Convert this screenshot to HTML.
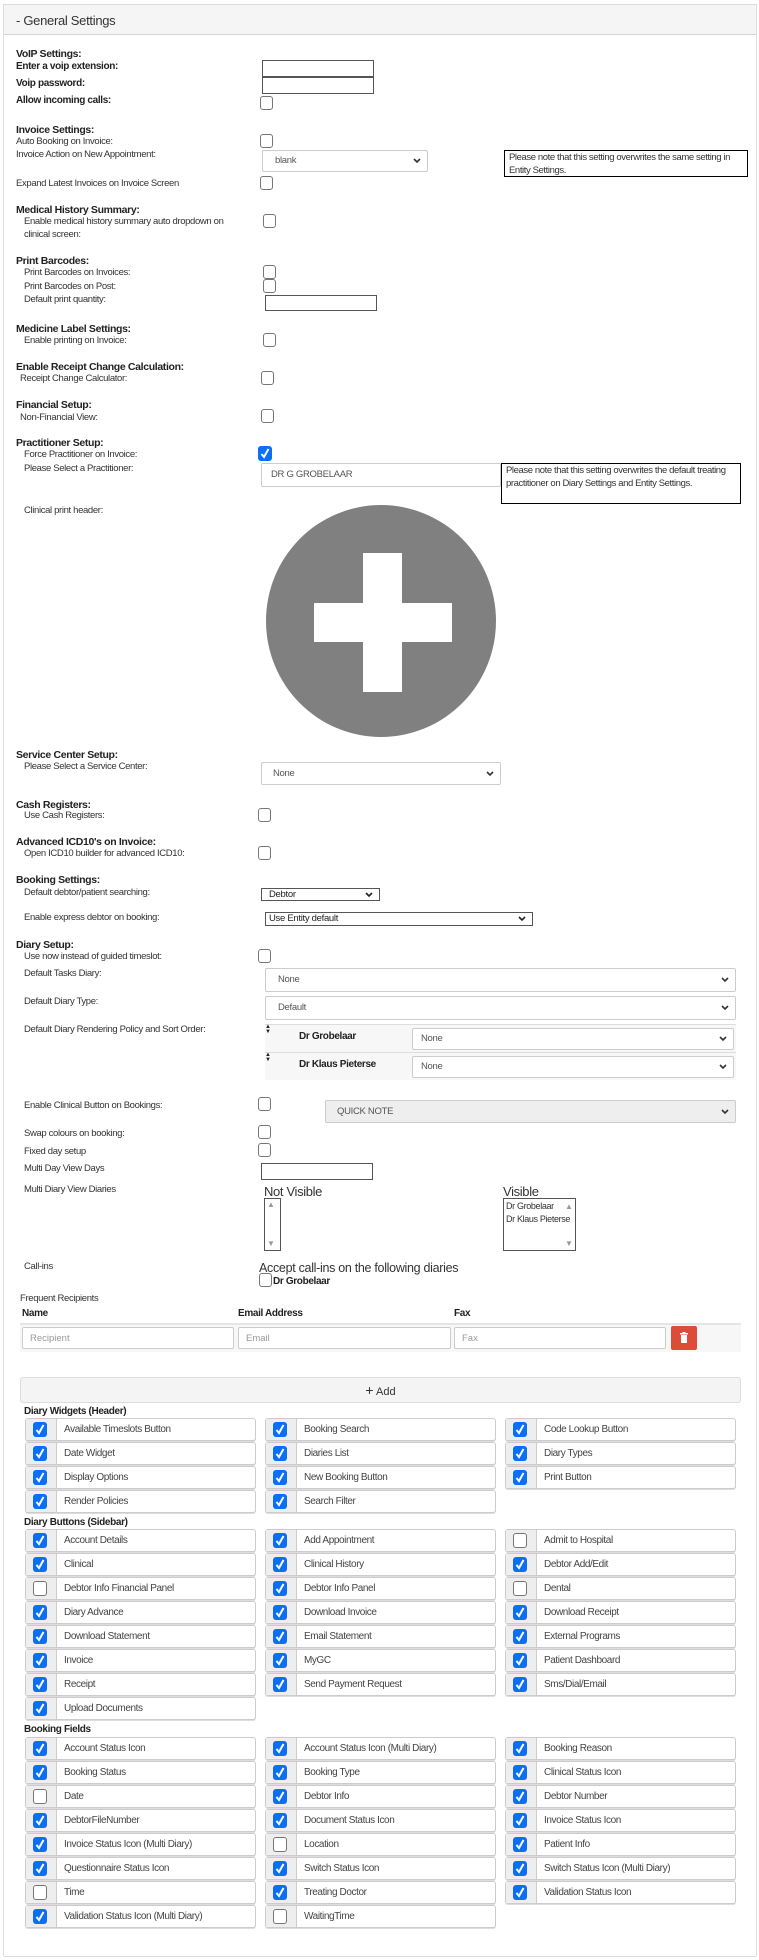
<!DOCTYPE html>
<html><head><meta charset="utf-8">
<style>
*{box-sizing:border-box;margin:0;padding:0}
body{width:759px;height:1960px;background:#fff;font-family:"Liberation Sans",Arial,sans-serif;color:#333;position:relative;overflow:hidden}
.panel{position:absolute;left:3px;top:4px;width:754px;height:1953px;border:1px solid #ddd;border-radius:2px}
.hdr{position:absolute;left:3px;top:4px;width:754px;height:31px;background:#f5f5f5;border:1px solid #ddd;border-bottom:1px solid #d6d6d6}
.hdr span{position:absolute;left:12px;top:8px;font-size:13px;color:#333;letter-spacing:-0.3px}
.t{position:absolute;font-size:9.5px;line-height:12px;color:#333;white-space:nowrap;letter-spacing:-0.35px}
.b{position:absolute;font-size:10.5px;line-height:12px;font-weight:bold;color:#222;white-space:nowrap;letter-spacing:-0.35px}
.cb{position:absolute;width:13px;height:14px;border:1px solid #767676;border-radius:3px;background:#fff}
.cbc{position:absolute;width:14px;height:15px;border-radius:3px;background:#0b6ef6}
.cbc svg,.ci svg{position:absolute;left:1px;top:1px}
.inp{position:absolute;border:1px solid #555;background:#fff}
.sel{position:absolute;border:1px solid #ccc;border-radius:2px;background:#fff;font-size:9.5px;color:#555;letter-spacing:-0.3px;padding-left:12px;white-space:nowrap}
.sel svg{position:absolute;right:6px;top:50%;margin-top:-3px}
.note{position:absolute;border:1px solid #000;font-size:9.5px;line-height:20px;color:#333;padding:0 4px;letter-spacing:-0.4px}
.grid{position:absolute;left:25px;display:grid;grid-template-columns:231px 231px 231px;column-gap:9px;row-gap:1px;grid-auto-rows:23px}
.wi{position:relative;border:1px solid #ccc;border-radius:3px;background:#fff;box-shadow:0 1px 0 #ddd}
.wi .ad{position:absolute;left:0;top:0;width:31px;height:21px;background:#eee;border-right:1px solid #ccc}
.wi .ci{position:absolute;left:7px;top:3px;width:14px;height:15px;border-radius:3px;background:#0b6ef6}
.wi .cu{position:absolute;left:7px;top:3px;width:14px;height:15px;border-radius:3px;background:#fff;border:1px solid #767676}
.wi .lb{position:absolute;left:38px;top:0;font-size:10px;line-height:21px;color:#444;white-space:nowrap;letter-spacing:-0.4px}
.rin{position:absolute;top:1327px;height:22px;border:1px solid #ccc;border-radius:2px;background:#fff;font-size:9.5px;color:#999;padding:5px 0 0 7px}
</style></head><body>
<div class="panel"></div>
<div class="hdr"><span>- General Settings</span></div>

<div class="b" style="left:16px;top:48px">VoIP Settings:</div>
<div class="b" style="left:16px;top:61px;font-weight:bold;font-size:10px">Enter a voip extension:</div>
<div class="inp" style="left:262px;top:60px;width:112px;height:17px"></div>
<div class="b" style="left:16px;top:78px;font-size:10px">Voip password:</div>
<div class="inp" style="left:262px;top:77px;width:112px;height:17px"></div>
<div class="b" style="left:16px;top:95px;font-size:10px">Allow incoming calls:</div>
<div class="cb" style="left:260px;top:96px"></div>

<div class="b" style="left:16px;top:124px">Invoice Settings:</div>
<div class="t" style="left:16px;top:136px">Auto Booking on Invoice:</div>
<div class="cb" style="left:260px;top:134px"></div>
<div class="t" style="left:16px;top:149px">Invoice Action on New Appointment:</div>
<div class="sel" style="left:262px;top:150px;width:166px;height:22px;line-height:20px">blank<svg width="8" height="6"><path d="M1 1l3 3 3-3" stroke="#333" stroke-width="1.6" fill="none"/></svg></div>
<div class="note" style="left:504px;top:150px;width:244px;height:27px;line-height:13px;padding-top:0">Please note that this setting overwrites the same setting in Entity Settings.</div>
<div class="t" style="left:16px;top:178px">Expand Latest Invoices on Invoice Screen</div>
<div class="cb" style="left:260px;top:176px"></div>

<div class="b" style="left:16px;top:204px">Medical History Summary:</div>
<div class="t" style="left:24px;top:216px">Enable medical history summary auto dropdown on</div>
<div class="t" style="left:24px;top:229px">clinical screen:</div>
<div class="cb" style="left:263px;top:214px"></div>

<div class="b" style="left:16px;top:255px">Print Barcodes:</div>
<div class="t" style="left:24px;top:267px">Print Barcodes on Invoices:</div>
<div class="cb" style="left:263px;top:265px"></div>
<div class="t" style="left:24px;top:281px">Print Barcodes on Post:</div>
<div class="cb" style="left:263px;top:279px"></div>
<div class="t" style="left:24px;top:294px">Default print quantity:</div>
<div class="inp" style="left:265px;top:295px;width:112px;height:16px"></div>

<div class="b" style="left:16px;top:323px">Medicine Label Settings:</div>
<div class="t" style="left:24px;top:335px">Enable printing on Invoice:</div>
<div class="cb" style="left:263px;top:333px"></div>

<div class="b" style="left:16px;top:361px">Enable Receipt Change Calculation:</div>
<div class="t" style="left:20px;top:373px">Receipt Change Calculator:</div>
<div class="cb" style="left:261px;top:371px"></div>

<div class="b" style="left:16px;top:399px">Financial Setup:</div>
<div class="t" style="left:20px;top:412px">Non-Financial View:</div>
<div class="cb" style="left:261px;top:409px"></div>

<div class="b" style="left:16px;top:437px">Practitioner Setup:</div>
<div class="t" style="left:24px;top:449px">Force Practitioner on Invoice:</div>
<div class="cbc" style="left:258px;top:446px"><svg width="12" height="13"><path d="M2.5 7l2.5 3 4.5-8" stroke="#fff" stroke-width="2" fill="none"/></svg></div>
<div class="t" style="left:24px;top:463px">Please Select a Practitioner:</div>
<div class="sel" style="left:261px;top:463px;width:240px;height:24px;line-height:22px;padding-left:9px">DR G GROBELAAR</div>
<div class="note" style="left:501px;top:463px;width:240px;height:41px;line-height:13px">Please note that this setting overwrites the default treating practitioner on Diary Settings and Entity Settings.</div>
<div class="t" style="left:24px;top:505px">Clinical print header:</div>
<div style="position:absolute;left:266px;top:505px;width:230px;height:232px;border-radius:50%;background:#808080"></div>
<div style="position:absolute;left:363px;top:553px;width:39px;height:139px;background:#fff"></div>
<div style="position:absolute;left:314px;top:603px;width:138px;height:39px;background:#fff"></div>

<div class="b" style="left:16px;top:749px">Service Center Setup:</div>
<div class="t" style="left:24px;top:761px">Please Select a Service Center:</div>
<div class="sel" style="left:261px;top:762px;width:240px;height:23px;line-height:21px;padding-left:11px">None<svg width="8" height="6"><path d="M1 1l3 3 3-3" stroke="#333" stroke-width="1.6" fill="none"/></svg></div>

<div class="b" style="left:16px;top:799px">Cash Registers:</div>
<div class="t" style="left:24px;top:810px">Use Cash Registers:</div>
<div class="cb" style="left:258px;top:808px"></div>

<div class="b" style="left:16px;top:836px">Advanced ICD10's on Invoice:</div>
<div class="t" style="left:24px;top:848px">Open ICD10 builder for advanced ICD10:</div>
<div class="cb" style="left:258px;top:846px"></div>

<div class="b" style="left:16px;top:874px">Booking Settings:</div>
<div class="t" style="left:24px;top:887px">Default debtor/patient searching:</div>
<div class="sel" style="left:261px;top:888px;width:119px;height:13px;line-height:11px;border-color:#555;border-radius:0;padding-left:7px;color:#222">Debtor<svg width="8" height="6"><path d="M1 1l3 3 3-3" stroke="#222" stroke-width="1.6" fill="none"/></svg></div>
<div class="t" style="left:24px;top:912px">Enable express debtor on booking:</div>
<div class="sel" style="left:265px;top:912px;width:268px;height:14px;line-height:12px;border-color:#555;border-radius:0;padding-left:3px;color:#222">Use Entity default<svg width="8" height="6"><path d="M1 1l3 3 3-3" stroke="#222" stroke-width="1.6" fill="none"/></svg></div>

<div class="b" style="left:16px;top:939px">Diary Setup:</div>
<div class="t" style="left:24px;top:951px">Use now instead of guided timeslot:</div>
<div class="cb" style="left:258px;top:949px"></div>
<div class="t" style="left:24px;top:968px">Default Tasks Diary:</div>
<div class="sel" style="left:265px;top:968px;width:471px;height:24px;line-height:22px">None<svg width="8" height="6"><path d="M1 1l3 3 3-3" stroke="#333" stroke-width="1.6" fill="none"/></svg></div>
<div class="t" style="left:24px;top:996px">Default Diary Type:</div>
<div class="sel" style="left:265px;top:996px;width:471px;height:24px;line-height:22px">Default<svg width="8" height="6"><path d="M1 1l3 3 3-3" stroke="#333" stroke-width="1.6" fill="none"/></svg></div>
<div class="t" style="left:24px;top:1024px">Default Diary Rendering Policy and Sort Order:</div>
<div style="position:absolute;left:265px;top:1024px;width:471px;height:56px;background:#f7f7f7;border-top:1px solid #ddd"></div>
<div style="position:absolute;left:265px;top:1052px;width:471px;height:1px;background:#ddd"></div>
<div style="position:absolute;left:265px;top:1025px;font-size:6px;line-height:5px;color:#222">▲<br>▼</div>
<div style="position:absolute;left:265px;top:1053px;font-size:6px;line-height:5px;color:#222">▲<br>▼</div>
<div class="b" style="left:299px;top:1031px;font-size:10px">Dr Grobelaar</div>
<div class="sel" style="left:412px;top:1028px;width:322px;height:22px;line-height:20px;padding-left:8px">None<svg width="8" height="6"><path d="M1 1l3 3 3-3" stroke="#333" stroke-width="1.6" fill="none"/></svg></div>
<div class="b" style="left:299px;top:1059px;font-size:10px">Dr Klaus Pieterse</div>
<div class="sel" style="left:412px;top:1056px;width:322px;height:22px;line-height:20px;padding-left:8px">None<svg width="8" height="6"><path d="M1 1l3 3 3-3" stroke="#333" stroke-width="1.6" fill="none"/></svg></div>

<div class="t" style="left:24px;top:1100px">Enable Clinical Button on Bookings:</div>
<div class="cb" style="left:258px;top:1097px"></div>
<div class="sel" style="left:325px;top:1100px;width:411px;height:23px;line-height:21px;background:#eee;padding-left:11px">QUICK NOTE<svg width="8" height="6"><path d="M1 1l3 3 3-3" stroke="#333" stroke-width="1.6" fill="none"/></svg></div>
<div class="t" style="left:24px;top:1128px">Swap colours on booking:</div>
<div class="cb" style="left:258px;top:1125px"></div>
<div class="t" style="left:24px;top:1146px">Fixed day setup</div>
<div class="cb" style="left:258px;top:1143px"></div>
<div class="t" style="left:24px;top:1163px">Multi Day View Days</div>
<div class="inp" style="left:261px;top:1163px;width:112px;height:17px"></div>
<div class="t" style="left:24px;top:1184px">Multi Diary View Diaries</div>
<div class="t" style="left:264px;top:1185px;font-size:13px;line-height:14px">Not Visible</div>
<div style="position:absolute;left:264px;top:1198px;width:17px;height:53px;border:1px solid #555;background:#fff"></div>
<div style="position:absolute;left:267px;top:1201px;font-size:8px;line-height:8px;color:#999">▲</div>
<div style="position:absolute;left:267px;top:1240px;font-size:8px;line-height:8px;color:#999">▼</div>
<div class="t" style="left:503px;top:1185px;font-size:13px;line-height:14px">Visible</div>
<div style="position:absolute;left:503px;top:1198px;width:73px;height:53px;border:1px solid #555;background:#fff"></div>
<div class="t" style="left:506px;top:1200px;font-size:9px">Dr Grobelaar</div>
<div class="t" style="left:506px;top:1213px;font-size:9px">Dr Klaus Pieterse</div>
<div style="position:absolute;left:565px;top:1203px;font-size:8px;line-height:8px;color:#999">▲</div>
<div style="position:absolute;left:565px;top:1240px;font-size:8px;line-height:8px;color:#999">▼</div>

<div class="t" style="left:24px;top:1261px">Call-ins</div>
<div class="t" style="left:259px;top:1261px;font-size:12.5px;line-height:14px;letter-spacing:-0.3px">Accept call-ins on the following diaries</div>
<div class="cb" style="left:259px;top:1273px"></div>
<div class="b" style="left:273px;top:1276px;font-size:10px">Dr Grobelaar</div>

<div class="t" style="left:20px;top:1293px">Frequent Recipients</div>
<div class="b" style="left:22px;top:1308px;font-size:10px">Name</div>
<div class="b" style="left:238px;top:1308px;font-size:10px">Email Address</div>
<div class="b" style="left:454px;top:1308px;font-size:10px">Fax</div>
<div style="position:absolute;left:20px;top:1323px;width:721px;height:2px;background:#e5e5e5"></div>
<div style="position:absolute;left:20px;top:1325px;width:721px;height:27px;background:#f7f7f7"></div>
<div class="rin" style="left:22px;width:212px">Recipient</div>
<div class="rin" style="left:238px;width:213px">Email</div>
<div class="rin" style="left:454px;width:212px">Fax</div>
<div style="position:absolute;left:671px;top:1326px;width:26px;height:24px;background:#dd4b39;border-radius:2px"><svg width="26" height="24"><rect x="10" y="9" width="6" height="8" fill="#fff"/><rect x="9" y="7" width="8" height="1.5" fill="#fff"/><rect x="11.5" y="6" width="3" height="1.5" fill="#fff"/></svg></div>

<div style="position:absolute;left:20px;top:1377px;width:721px;height:26px;background:#f4f4f4;border:1px solid #ddd;border-radius:3px;text-align:center;font-size:11px;line-height:24px;color:#333"><span style="font-size:14px">+</span> Add</div>

<div class="b" style="left:24px;top:1406px;font-size:10px">Diary Widgets (Header)</div>
<div class="grid" style="top:1418px">
<div class="wi"><div class="ad"></div><div class="ci"><svg width="12" height="13"><path d="M2.5 7l2.5 3 4.5-8" stroke="#fff" stroke-width="2" fill="none"/></svg></div><div class="lb">Available Timeslots Button</div></div>
<div class="wi"><div class="ad"></div><div class="ci"><svg width="12" height="13"><path d="M2.5 7l2.5 3 4.5-8" stroke="#fff" stroke-width="2" fill="none"/></svg></div><div class="lb">Booking Search</div></div>
<div class="wi"><div class="ad"></div><div class="ci"><svg width="12" height="13"><path d="M2.5 7l2.5 3 4.5-8" stroke="#fff" stroke-width="2" fill="none"/></svg></div><div class="lb">Code Lookup Button</div></div>
<div class="wi"><div class="ad"></div><div class="ci"><svg width="12" height="13"><path d="M2.5 7l2.5 3 4.5-8" stroke="#fff" stroke-width="2" fill="none"/></svg></div><div class="lb">Date Widget</div></div>
<div class="wi"><div class="ad"></div><div class="ci"><svg width="12" height="13"><path d="M2.5 7l2.5 3 4.5-8" stroke="#fff" stroke-width="2" fill="none"/></svg></div><div class="lb">Diaries List</div></div>
<div class="wi"><div class="ad"></div><div class="ci"><svg width="12" height="13"><path d="M2.5 7l2.5 3 4.5-8" stroke="#fff" stroke-width="2" fill="none"/></svg></div><div class="lb">Diary Types</div></div>
<div class="wi"><div class="ad"></div><div class="ci"><svg width="12" height="13"><path d="M2.5 7l2.5 3 4.5-8" stroke="#fff" stroke-width="2" fill="none"/></svg></div><div class="lb">Display Options</div></div>
<div class="wi"><div class="ad"></div><div class="ci"><svg width="12" height="13"><path d="M2.5 7l2.5 3 4.5-8" stroke="#fff" stroke-width="2" fill="none"/></svg></div><div class="lb">New Booking Button</div></div>
<div class="wi"><div class="ad"></div><div class="ci"><svg width="12" height="13"><path d="M2.5 7l2.5 3 4.5-8" stroke="#fff" stroke-width="2" fill="none"/></svg></div><div class="lb">Print Button</div></div>
<div class="wi"><div class="ad"></div><div class="ci"><svg width="12" height="13"><path d="M2.5 7l2.5 3 4.5-8" stroke="#fff" stroke-width="2" fill="none"/></svg></div><div class="lb">Render Policies</div></div>
<div class="wi"><div class="ad"></div><div class="ci"><svg width="12" height="13"><path d="M2.5 7l2.5 3 4.5-8" stroke="#fff" stroke-width="2" fill="none"/></svg></div><div class="lb">Search Filter</div></div>
</div>

<div class="b" style="left:24px;top:1517px;font-size:10px">Diary Buttons (Sidebar)</div>
<div class="grid" style="top:1529px">
<div class="wi"><div class="ad"></div><div class="ci"><svg width="12" height="13"><path d="M2.5 7l2.5 3 4.5-8" stroke="#fff" stroke-width="2" fill="none"/></svg></div><div class="lb">Account Details</div></div>
<div class="wi"><div class="ad"></div><div class="ci"><svg width="12" height="13"><path d="M2.5 7l2.5 3 4.5-8" stroke="#fff" stroke-width="2" fill="none"/></svg></div><div class="lb">Add Appointment</div></div>
<div class="wi"><div class="ad"></div><div class="cu"></div><div class="lb">Admit to Hospital</div></div>
<div class="wi"><div class="ad"></div><div class="ci"><svg width="12" height="13"><path d="M2.5 7l2.5 3 4.5-8" stroke="#fff" stroke-width="2" fill="none"/></svg></div><div class="lb">Clinical</div></div>
<div class="wi"><div class="ad"></div><div class="ci"><svg width="12" height="13"><path d="M2.5 7l2.5 3 4.5-8" stroke="#fff" stroke-width="2" fill="none"/></svg></div><div class="lb">Clinical History</div></div>
<div class="wi"><div class="ad"></div><div class="ci"><svg width="12" height="13"><path d="M2.5 7l2.5 3 4.5-8" stroke="#fff" stroke-width="2" fill="none"/></svg></div><div class="lb">Debtor Add/Edit</div></div>
<div class="wi"><div class="ad"></div><div class="cu"></div><div class="lb">Debtor Info Financial Panel</div></div>
<div class="wi"><div class="ad"></div><div class="ci"><svg width="12" height="13"><path d="M2.5 7l2.5 3 4.5-8" stroke="#fff" stroke-width="2" fill="none"/></svg></div><div class="lb">Debtor Info Panel</div></div>
<div class="wi"><div class="ad"></div><div class="cu"></div><div class="lb">Dental</div></div>
<div class="wi"><div class="ad"></div><div class="ci"><svg width="12" height="13"><path d="M2.5 7l2.5 3 4.5-8" stroke="#fff" stroke-width="2" fill="none"/></svg></div><div class="lb">Diary Advance</div></div>
<div class="wi"><div class="ad"></div><div class="ci"><svg width="12" height="13"><path d="M2.5 7l2.5 3 4.5-8" stroke="#fff" stroke-width="2" fill="none"/></svg></div><div class="lb">Download Invoice</div></div>
<div class="wi"><div class="ad"></div><div class="ci"><svg width="12" height="13"><path d="M2.5 7l2.5 3 4.5-8" stroke="#fff" stroke-width="2" fill="none"/></svg></div><div class="lb">Download Receipt</div></div>
<div class="wi"><div class="ad"></div><div class="ci"><svg width="12" height="13"><path d="M2.5 7l2.5 3 4.5-8" stroke="#fff" stroke-width="2" fill="none"/></svg></div><div class="lb">Download Statement</div></div>
<div class="wi"><div class="ad"></div><div class="ci"><svg width="12" height="13"><path d="M2.5 7l2.5 3 4.5-8" stroke="#fff" stroke-width="2" fill="none"/></svg></div><div class="lb">Email Statement</div></div>
<div class="wi"><div class="ad"></div><div class="ci"><svg width="12" height="13"><path d="M2.5 7l2.5 3 4.5-8" stroke="#fff" stroke-width="2" fill="none"/></svg></div><div class="lb">External Programs</div></div>
<div class="wi"><div class="ad"></div><div class="ci"><svg width="12" height="13"><path d="M2.5 7l2.5 3 4.5-8" stroke="#fff" stroke-width="2" fill="none"/></svg></div><div class="lb">Invoice</div></div>
<div class="wi"><div class="ad"></div><div class="ci"><svg width="12" height="13"><path d="M2.5 7l2.5 3 4.5-8" stroke="#fff" stroke-width="2" fill="none"/></svg></div><div class="lb">MyGC</div></div>
<div class="wi"><div class="ad"></div><div class="ci"><svg width="12" height="13"><path d="M2.5 7l2.5 3 4.5-8" stroke="#fff" stroke-width="2" fill="none"/></svg></div><div class="lb">Patient Dashboard</div></div>
<div class="wi"><div class="ad"></div><div class="ci"><svg width="12" height="13"><path d="M2.5 7l2.5 3 4.5-8" stroke="#fff" stroke-width="2" fill="none"/></svg></div><div class="lb">Receipt</div></div>
<div class="wi"><div class="ad"></div><div class="ci"><svg width="12" height="13"><path d="M2.5 7l2.5 3 4.5-8" stroke="#fff" stroke-width="2" fill="none"/></svg></div><div class="lb">Send Payment Request</div></div>
<div class="wi"><div class="ad"></div><div class="ci"><svg width="12" height="13"><path d="M2.5 7l2.5 3 4.5-8" stroke="#fff" stroke-width="2" fill="none"/></svg></div><div class="lb">Sms/Dial/Email</div></div>
<div class="wi"><div class="ad"></div><div class="ci"><svg width="12" height="13"><path d="M2.5 7l2.5 3 4.5-8" stroke="#fff" stroke-width="2" fill="none"/></svg></div><div class="lb">Upload Documents</div></div>
</div>

<div class="b" style="left:24px;top:1724px;font-size:10px">Booking Fields</div>
<div class="grid" style="top:1737px">
<div class="wi"><div class="ad"></div><div class="ci"><svg width="12" height="13"><path d="M2.5 7l2.5 3 4.5-8" stroke="#fff" stroke-width="2" fill="none"/></svg></div><div class="lb">Account Status Icon</div></div>
<div class="wi"><div class="ad"></div><div class="ci"><svg width="12" height="13"><path d="M2.5 7l2.5 3 4.5-8" stroke="#fff" stroke-width="2" fill="none"/></svg></div><div class="lb">Account Status Icon (Multi Diary)</div></div>
<div class="wi"><div class="ad"></div><div class="ci"><svg width="12" height="13"><path d="M2.5 7l2.5 3 4.5-8" stroke="#fff" stroke-width="2" fill="none"/></svg></div><div class="lb">Booking Reason</div></div>
<div class="wi"><div class="ad"></div><div class="ci"><svg width="12" height="13"><path d="M2.5 7l2.5 3 4.5-8" stroke="#fff" stroke-width="2" fill="none"/></svg></div><div class="lb">Booking Status</div></div>
<div class="wi"><div class="ad"></div><div class="ci"><svg width="12" height="13"><path d="M2.5 7l2.5 3 4.5-8" stroke="#fff" stroke-width="2" fill="none"/></svg></div><div class="lb">Booking Type</div></div>
<div class="wi"><div class="ad"></div><div class="ci"><svg width="12" height="13"><path d="M2.5 7l2.5 3 4.5-8" stroke="#fff" stroke-width="2" fill="none"/></svg></div><div class="lb">Clinical Status Icon</div></div>
<div class="wi"><div class="ad"></div><div class="cu"></div><div class="lb">Date</div></div>
<div class="wi"><div class="ad"></div><div class="ci"><svg width="12" height="13"><path d="M2.5 7l2.5 3 4.5-8" stroke="#fff" stroke-width="2" fill="none"/></svg></div><div class="lb">Debtor Info</div></div>
<div class="wi"><div class="ad"></div><div class="ci"><svg width="12" height="13"><path d="M2.5 7l2.5 3 4.5-8" stroke="#fff" stroke-width="2" fill="none"/></svg></div><div class="lb">Debtor Number</div></div>
<div class="wi"><div class="ad"></div><div class="ci"><svg width="12" height="13"><path d="M2.5 7l2.5 3 4.5-8" stroke="#fff" stroke-width="2" fill="none"/></svg></div><div class="lb">DebtorFileNumber</div></div>
<div class="wi"><div class="ad"></div><div class="ci"><svg width="12" height="13"><path d="M2.5 7l2.5 3 4.5-8" stroke="#fff" stroke-width="2" fill="none"/></svg></div><div class="lb">Document Status Icon</div></div>
<div class="wi"><div class="ad"></div><div class="ci"><svg width="12" height="13"><path d="M2.5 7l2.5 3 4.5-8" stroke="#fff" stroke-width="2" fill="none"/></svg></div><div class="lb">Invoice Status Icon</div></div>
<div class="wi"><div class="ad"></div><div class="ci"><svg width="12" height="13"><path d="M2.5 7l2.5 3 4.5-8" stroke="#fff" stroke-width="2" fill="none"/></svg></div><div class="lb">Invoice Status Icon (Multi Diary)</div></div>
<div class="wi"><div class="ad"></div><div class="cu"></div><div class="lb">Location</div></div>
<div class="wi"><div class="ad"></div><div class="ci"><svg width="12" height="13"><path d="M2.5 7l2.5 3 4.5-8" stroke="#fff" stroke-width="2" fill="none"/></svg></div><div class="lb">Patient Info</div></div>
<div class="wi"><div class="ad"></div><div class="ci"><svg width="12" height="13"><path d="M2.5 7l2.5 3 4.5-8" stroke="#fff" stroke-width="2" fill="none"/></svg></div><div class="lb">Questionnaire Status Icon</div></div>
<div class="wi"><div class="ad"></div><div class="ci"><svg width="12" height="13"><path d="M2.5 7l2.5 3 4.5-8" stroke="#fff" stroke-width="2" fill="none"/></svg></div><div class="lb">Switch Status Icon</div></div>
<div class="wi"><div class="ad"></div><div class="ci"><svg width="12" height="13"><path d="M2.5 7l2.5 3 4.5-8" stroke="#fff" stroke-width="2" fill="none"/></svg></div><div class="lb">Switch Status Icon (Multi Diary)</div></div>
<div class="wi"><div class="ad"></div><div class="cu"></div><div class="lb">Time</div></div>
<div class="wi"><div class="ad"></div><div class="ci"><svg width="12" height="13"><path d="M2.5 7l2.5 3 4.5-8" stroke="#fff" stroke-width="2" fill="none"/></svg></div><div class="lb">Treating Doctor</div></div>
<div class="wi"><div class="ad"></div><div class="ci"><svg width="12" height="13"><path d="M2.5 7l2.5 3 4.5-8" stroke="#fff" stroke-width="2" fill="none"/></svg></div><div class="lb">Validation Status Icon</div></div>
<div class="wi"><div class="ad"></div><div class="ci"><svg width="12" height="13"><path d="M2.5 7l2.5 3 4.5-8" stroke="#fff" stroke-width="2" fill="none"/></svg></div><div class="lb">Validation Status Icon (Multi Diary)</div></div>
<div class="wi"><div class="ad"></div><div class="cu"></div><div class="lb">WaitingTime</div></div>
</div>
</body></html>
